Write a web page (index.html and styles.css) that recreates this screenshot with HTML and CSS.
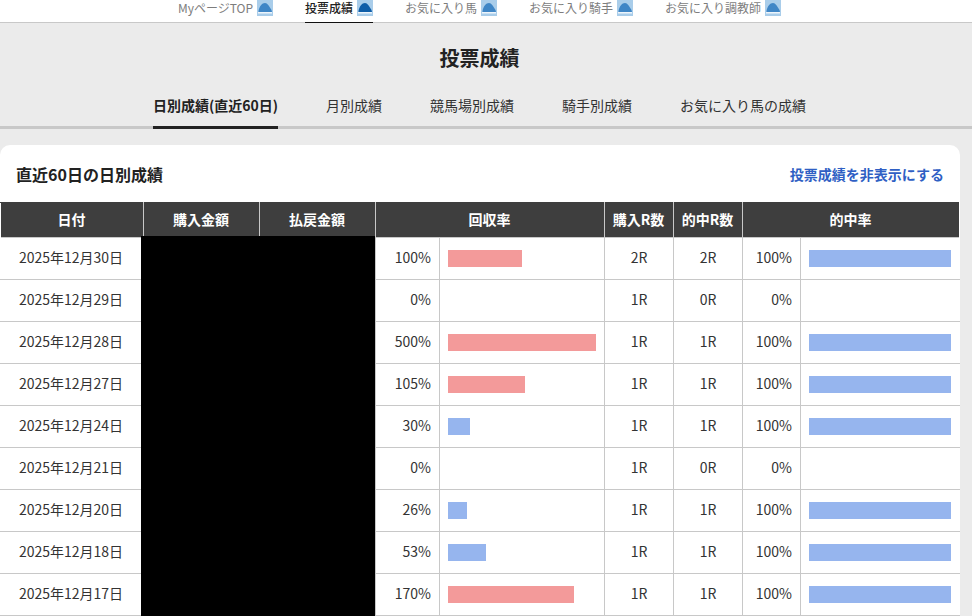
FILE: index.html
```html
<!DOCTYPE html>
<html lang="ja">
<head>
<meta charset="utf-8">
<title>投票成績</title>
<link rel="stylesheet" href="styles.css">
</head>
<body>
<svg class="defs" width="0" height="0" aria-hidden="true">
  <symbol id="cap" viewBox="0 0 16 16">
    <rect x="0" y="0" width="16" height="16" fill="#a9cdea"/>
    <path d="M1.5 11C2.5 6 5 3 8 3C10.5 3 12 6 14.5 10L15 12L1.5 12Z" fill="currentColor"/>
    <rect x="1" y="12" width="14" height="1.5" fill="#eef5fb"/>
  </symbol>
</svg>
<header class="topnav">
  <nav class="topnav-inner">
    <a class="topnav-item">MyページTOP<svg class="cap"><use href="#cap"/></svg></a>
    <a class="topnav-item is-active">投票成績<svg class="cap"><use href="#cap"/></svg></a>
    <a class="topnav-item">お気に入り馬<svg class="cap"><use href="#cap"/></svg></a>
    <a class="topnav-item">お気に入り騎手<svg class="cap"><use href="#cap"/></svg></a>
    <a class="topnav-item">お気に入り調教師<svg class="cap"><use href="#cap"/></svg></a>
  </nav>
</header>
<main class="page">
  <h1 class="page-title">投票成績</h1>
  <div class="tabs">
    <nav class="tabs-inner">
      <a class="tab is-active">日別成績(直近60日)</a>
      <a class="tab">月別成績</a>
      <a class="tab">競馬場別成績</a>
      <a class="tab">騎手別成績</a>
      <a class="tab">お気に入り馬の成績</a>
    </nav>
  </div>
  <section class="card">
    <div class="card-head">
      <h2 class="card-title">直近60日の日別成績</h2>
      <a class="card-link">投票成績を非表示にする</a>
    </div>
    <div class="table-wrap">
      <table class="results">
        <colgroup>
          <col class="c-date"><col class="c-money"><col class="c-money">
          <col class="c-rate"><col class="c-bar"><col class="c-r"><col class="c-r">
          <col class="c-hit"><col class="c-hitbar">
        </colgroup>
        <thead>
          <tr><th>日付</th><th>購入金額</th><th>払戻金額</th><th colspan="2">回収率</th><th>購入R数</th><th>的中R数</th><th colspan="2">的中率</th></tr>
        </thead>
        <tbody>
          <tr><td>2025年12月30日</td><td></td><td></td><td class="num">100%</td><td class="barcell"><div class="bar red" style="width:74px"></div></td><td>2R</td><td>2R</td><td class="num">100%</td><td class="barcell"><div class="bar blue full"></div></td></tr>
          <tr><td>2025年12月29日</td><td></td><td></td><td class="num">0%</td><td class="barcell"></td><td>1R</td><td>0R</td><td class="num">0%</td><td class="barcell"></td></tr>
          <tr><td>2025年12月28日</td><td></td><td></td><td class="num">500%</td><td class="barcell"><div class="bar red" style="width:148px"></div></td><td>1R</td><td>1R</td><td class="num">100%</td><td class="barcell"><div class="bar blue full"></div></td></tr>
          <tr><td>2025年12月27日</td><td></td><td></td><td class="num">105%</td><td class="barcell"><div class="bar red" style="width:77px"></div></td><td>1R</td><td>1R</td><td class="num">100%</td><td class="barcell"><div class="bar blue full"></div></td></tr>
          <tr><td>2025年12月24日</td><td></td><td></td><td class="num">30%</td><td class="barcell"><div class="bar blue" style="width:22px"></div></td><td>1R</td><td>1R</td><td class="num">100%</td><td class="barcell"><div class="bar blue full"></div></td></tr>
          <tr><td>2025年12月21日</td><td></td><td></td><td class="num">0%</td><td class="barcell"></td><td>1R</td><td>0R</td><td class="num">0%</td><td class="barcell"></td></tr>
          <tr><td>2025年12月20日</td><td></td><td></td><td class="num">26%</td><td class="barcell"><div class="bar blue" style="width:19px"></div></td><td>1R</td><td>1R</td><td class="num">100%</td><td class="barcell"><div class="bar blue full"></div></td></tr>
          <tr><td>2025年12月18日</td><td></td><td></td><td class="num">53%</td><td class="barcell"><div class="bar blue" style="width:38px"></div></td><td>1R</td><td>1R</td><td class="num">100%</td><td class="barcell"><div class="bar blue full"></div></td></tr>
          <tr><td>2025年12月17日</td><td></td><td></td><td class="num">170%</td><td class="barcell"><div class="bar red" style="width:126px"></div></td><td>1R</td><td>1R</td><td class="num">100%</td><td class="barcell"><div class="bar blue full"></div></td></tr>
        </tbody>
      </table>
      <div class="redaction"></div>
    </div>
  </section>
</main>
</body>
</html>
```
FILE: styles.css
```css
* { box-sizing: border-box; }
html, body { margin: 0; padding: 0; }
html { overflow: hidden; }
body {
  height: 616px;
  overflow: hidden;
  background: #ebebeb;
  color: #333;
  font-family: "Noto Sans CJK JP", "Noto Sans", sans-serif;
  font-size: 14px;
}
.defs { position: absolute; }
a { color: inherit; text-decoration: none; }

.topnav { background: #fff; border-bottom: 1px solid #c8c8c8; height: 23px; }
.topnav-inner { width: 959px; display: flex; justify-content: center; gap: 32px; height: 23px; }
.topnav-item {
  display: flex; align-items: flex-start; gap: 4px;
  height: 23px;
  font-size: 12px;
  line-height: 16px;
  color: #7d7d7d;
}
.topnav-item.is-active { color: #222; border-bottom: 1px solid #111; font-weight: 500; }
.cap { width: 16px; height: 16px; color: #3f86c6; flex: none; }
.is-active .cap { color: #0f5ea8; }

.page-title { margin: 0; padding-top: 20px; width: 959px; text-align: center; font-size: 20px; line-height: 30px; font-weight: 700; color: #222; }

.tabs { border-bottom: 3px solid #c8c8c8; margin-top: 19px; height: 37px; }
.tabs-inner { width: 959px; display: flex; justify-content: center; gap: 48px; }
.tab { height: 37px; font-size: 14px; line-height: 20px; padding-top: 3px; color: #333; }
.tab.is-active { font-weight: 700; color: #222; border-bottom: 3px solid #222; }

.card { width: 960px; margin-top: 16px; background: #fff; border-radius: 10px 10px 0 0; }
.card-head { display: flex; justify-content: space-between; align-items: center; padding: 18px 16px 18px 16px; height: 57px; }
.card-title { margin: 0; font-size: 16px; line-height: 22px; font-weight: 700; color: #222; }
.card-link { font-size: 14px; line-height: 20px; font-weight: 700; color: #2f5fc4; }

.table-wrap { position: relative; }
.results { width: 959px; table-layout: fixed; border-collapse: collapse; font-size: 14px; }
.c-date { width: 143px; }
.c-money { width: 116px; }
.c-rate { width: 64px; }
.c-bar { width: 165px; }
.c-r { width: 69px; }
.c-hit { width: 58px; }
.c-hitbar { width: 159px; }

.results th {
  background: #3e3e3e;
  color: #fff;
  font-weight: 700;
  height: 35px;
  padding: 0 1px 2px 0;
  border-left: 1px solid #c8c8c8;
  border-right: 1px solid #c8c8c8;
  border-top: 1px solid #3e3e3e;
  text-align: center;
}
.results td {
  height: 42px;
  padding: 0 8px 4px;
  text-align: center;
  border: 1px solid #c8c8c8;
  color: #333;
}
.results th:last-child, .results td:last-child { border-right: 1px solid #fff; }
.results th:first-child, .results td:first-child { border-left: 1px solid #fff; }
.results td:first-child { padding-right: 10px; }
.results td.num { text-align: right; }
.results td.barcell { padding-bottom: 0; }
.bar { height: 17px; }
.bar.red { background: #f39a9a; }
.bar.blue { background: #96b5ee; }
.bar.full { width: 142px; }

.redaction {
  position: absolute;
  left: 141px;
  top: 34px;
  width: 234px;
  bottom: 0;
  background: #000;
}
```
